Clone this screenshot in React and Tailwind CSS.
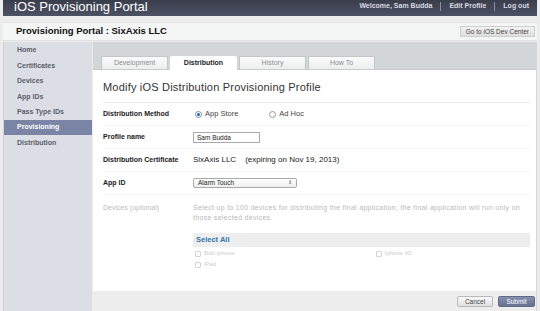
import { useState } from "react";

const sideItems = [
  "Home",
  "Certificates",
  "Devices",
  "App IDs",
  "Pass Type IDs",
  "Provisioning",
  "Distribution",
];

const tabs = ["Development", "Distribution", "History", "How To"];

function Row({ label, children }) {
  return (
    <div className="flex items-center h-[23px] border-b border-[#f6f6f6]">
      <div className="w-[90px] shrink-0 text-[7px] font-bold text-[#222]">
        {label}
      </div>
      <div className="flex items-center text-[7.5px] text-[#222]">
        {children}
      </div>
    </div>
  );
}

export default function App() {
  const [method, setMethod] = useState("store");
  const [name, setName] = useState("Sam Budda");

  return (
    <div className="w-[540px] h-[311px] overflow-hidden bg-[#ececec] px-[3px] font-['Liberation_Sans',Arial,sans-serif]">
      {/* top bar */}
      <div className="h-[16px] overflow-hidden bg-gradient-to-b from-[#3a3e4c] to-[#4c5164] flex justify-between items-start">
        <div className="pl-[11px] text-[13px] text-white leading-[13px]">
          iOS Provisioning Portal
        </div>
        <div className="flex items-center text-[7px] font-bold text-[#d8dae2] pr-[8px] pt-[1px]">
          <span>Welcome, Sam Budda</span>
          <span className="mx-[8px] w-px h-[9px] bg-[#8a8fa0]" />
          <span>Edit Profile</span>
          <span className="mx-[8px] w-px h-[9px] bg-[#8a8fa0]" />
          <span>Log out</span>
        </div>
      </div>

      {/* sub header */}
      <div className="mt-[6px] h-[19px] bg-[#f4f5f5] border-y border-[#e2e2e2] flex items-center justify-between pl-[13px] pr-[2px]">
        <div className="text-[9.5px] font-bold text-[#111]">
          Provisioning Portal : SixAxis LLC
        </div>
        <button className="h-[11px] px-[5px] bg-gradient-to-b from-[#f2f2f2] to-[#dedede] border border-[#cfcfcf] text-[6.5px] text-[#444]">
          Go to iOS Dev Center
        </button>
      </div>

      <div className="flex h-[270px] mt-[1px]">
        {/* sidebar */}
        <div className="w-[89px] shrink-0 bg-[#dbdee5] border-l border-[#cfd2d8] pt-[1px]">
          {sideItems.map((item) => (
            <div
              key={item}
              className={`h-[15.4px] flex items-center pl-[13px] text-[7px] font-bold ${
                item === "Provisioning"
                  ? "bg-[#7a85a6] text-white"
                  : "text-[#5a5e68]"
              }`}
            >
              {item}
            </div>
          ))}
        </div>

        {/* main */}
        <div className="flex-1 ml-[1px] flex flex-col bg-white border-r border-[#d6d6d6]">
          <div className="h-[28px] bg-[#d3d6d7] flex items-end pl-[8px] gap-[2px] border-b border-[#c8cbcc]">
            {tabs.map((tab) => (
              <div
                key={tab}
                className={`w-[67px] flex items-center justify-center rounded-t-[2px] text-[7px] ${
                  tab === "Distribution"
                    ? "bg-white font-bold text-[#222] -mb-px h-[14px]"
                    : "h-[13px] bg-gradient-to-b from-[#fbfbfb] to-[#eceded] border border-b-0 border-[#c4c6c8] text-[#8a8c90]"
                }`}
              >
                {tab}
              </div>
            ))}
          </div>

          <div className="flex-1 pl-[10px] pr-[6px]">
            <div className="h-[33px] flex items-center border-b border-[#ececec] text-[11px] tracking-[0.2px] text-[#333] pt-[2px]">
              Modify iOS Distribution Provisioning Profile
            </div>

            <Row label="Distribution Method">
              <label className="flex items-center gap-[3px] mr-[31px] ml-[2px] text-[#444]">
                <span
                  onClick={() => setMethod("store")}
                  className="w-[7px] h-[7px] rounded-full border border-[#6d8fc0] bg-white flex items-center justify-center"
                >
                  {method === "store" && (
                    <span className="w-[3px] h-[3px] rounded-full bg-[#2b5ea8]" />
                  )}
                </span>
                App Store
              </label>
              <label className="flex items-center gap-[3px] text-[#444]">
                <span
                  onClick={() => setMethod("adhoc")}
                  className="w-[7px] h-[7px] rounded-full border border-[#9a9a9a] bg-white flex items-center justify-center"
                >
                  {method === "adhoc" && (
                    <span className="w-[3px] h-[3px] rounded-full bg-[#2b5ea8]" />
                  )}
                </span>
                Ad Hoc
              </label>
            </Row>

            <Row label="Profile name">
              <input
                value={name}
                onChange={(e) => setName(e.target.value)}
                className="w-[67px] h-[11px] border border-[#aaa] px-[3px] text-[6.5px] text-[#222] outline-none"
              />
            </Row>

            <Row label="Distribution Certificate">
              <span className="text-[8px]">SixAxis LLC</span>
              <span className="ml-[9px] text-[8px]">(expiring on Nov 19, 2013)</span>
            </Row>

            <Row label="App ID">
              <div className="w-[104px] h-[10px] border border-[#aaa] rounded-[2px] bg-gradient-to-b from-white to-[#eee] flex items-center justify-between px-[4px] text-[6.5px] text-[#222]">
                <span>Alarm Touch</span>
                <span className="text-[5px] text-[#555]">⇕</span>
              </div>
            </Row>

            <div className="flex pt-[8px]">
              <div className="w-[90px] shrink-0 text-[7px] text-[#bcbcbc]">
                Devices (optional)
              </div>
              <div className="flex-1">
                <div className="text-[7px] leading-[10px] tracking-[0.3px] text-[#b9b9b9]">
                  <span className="whitespace-nowrap">
                    Select up to 100 devices for distributing the final application; the final application will run only on
                  </span>
                  <br />
                  those selected devices.
                </div>
                <div className="mt-[10px] h-[14px] bg-[#eeeeee] flex items-center pl-[3px] text-[7.5px] font-bold text-[#2f77ad]">
                  Select All
                </div>
                <div className="grid grid-cols-2 mt-[1px] text-[6px] text-[#cdcdcd]">
                  <div className="flex items-center gap-[3px] h-[11px] pl-[2px]">
                    <span className="w-[6px] h-[6px] border border-[#d4d4d4] rounded-[1px]" />
                    Bob-iphone
                  </div>
                  <div className="flex items-center gap-[3px] h-[11px] pl-[14px]">
                    <span className="w-[6px] h-[6px] border border-[#d4d4d4] rounded-[1px]" />
                    Iphone 4S
                  </div>
                  <div className="flex items-center gap-[3px] h-[11px] pl-[2px]">
                    <span className="w-[6px] h-[6px] border border-[#d4d4d4] rounded-[1px]" />
                    iPad
                  </div>
                </div>
              </div>
            </div>
          </div>

          <div className="h-[21px] bg-[#ededed] flex items-center justify-end gap-[5px] pr-[1px] shrink-0">
            <button className="w-[36px] h-[11px] bg-gradient-to-b from-[#fafafa] to-[#e0e0e0] border border-[#b9b9b9] rounded-[2px] text-[6.5px] text-[#444]">
              Cancel
            </button>
            <button className="w-[37px] h-[11px] bg-gradient-to-b from-[#8490ae] to-[#667290] border border-[#5f6a86] rounded-[2px] text-[6.5px] text-white">
              Submit
            </button>
          </div>
        </div>
      </div>
    </div>
  );
}
